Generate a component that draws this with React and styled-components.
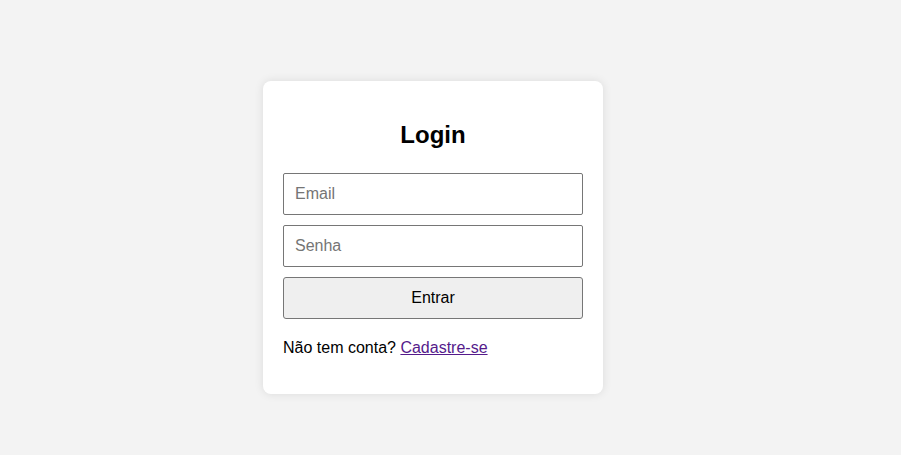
import React from "react";
import styled, { createGlobalStyle } from "styled-components";

const Global = createGlobalStyle`
  html, body { margin: 0; padding: 0; background: #f3f3f3; }
  body { font-family: "Liberation Sans", Arial, sans-serif; }
  * { box-sizing: border-box; }
`;

const Page = styled.div`
  min-height: 455px;
  padding: 81px 0 0 263px;
  display: flex;
  align-items: flex-start;
`;

const Card = styled.div`
  width: 340px;
  background: #ffffff;
  border-radius: 8px;
  box-shadow: 0 0 10px rgba(0, 0, 0, 0.1);
  padding: 20px;
  display: flex;
  flex-direction: column;
`;

const Title = styled.h2`
  margin: 20px 0 24px;
  font-size: 24px;
  line-height: 28px;
  font-weight: bold;
  text-align: center;
  color: #000;
`;

const Form = styled.form`
  display: flex;
  flex-direction: column;
  gap: 10px;
`;

const Input = styled.input`
  height: 42px;
  width: 100%;
  padding: 0 11px;
  border: 1px solid #767676;
  border-radius: 2px;
  font-family: "Liberation Sans", Arial, sans-serif;
  font-size: 16px;
  color: #000;
  background: #fff;
  outline: none;
  &::placeholder { color: #757575; }
`;

const Button = styled.button`
  height: 42px;
  width: 100%;
  border: 1px solid #767676;
  border-radius: 3px;
  background: #efefef;
  font-family: "Liberation Sans", Arial, sans-serif;
  font-size: 16px;
  color: #000;
  cursor: pointer;
`;

const Footer = styled.p`
  margin: 20px 0 17px;
  font-size: 16px;
  line-height: 18px;
  color: #000;
`;

const Link = styled.a`
  color: #551a8b;
  text-decoration: underline;
`;

export default function App() {
  return (
    <>
      <Global />
      <Page>
        <Card>
          <Title>Login</Title>
          <Form onSubmit={(e) => e.preventDefault()}>
            <Input type="email" placeholder="Email" />
            <Input type="password" placeholder="Senha" />
            <Button type="submit">Entrar</Button>
          </Form>
          <Footer>
            Não tem conta? <Link href="#cadastro">Cadastre-se</Link>
          </Footer>
        </Card>
      </Page>
    </>
  );
}
